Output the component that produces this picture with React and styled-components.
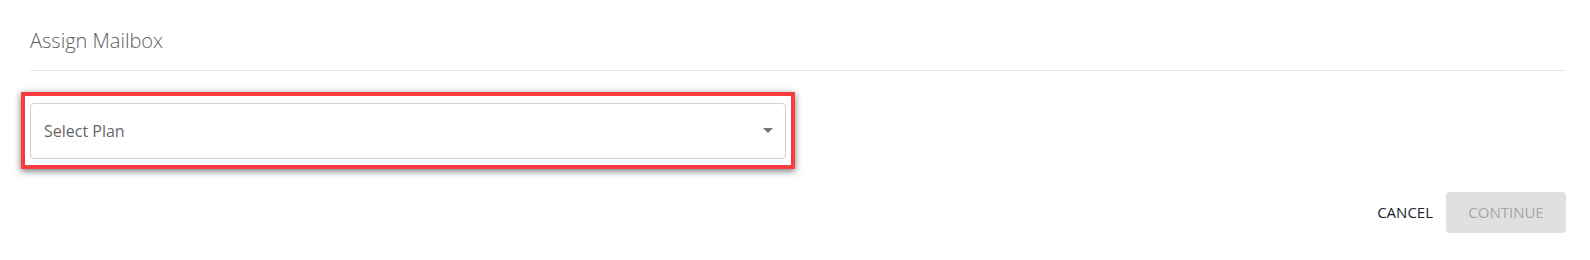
import React from "react";
import styled, { createGlobalStyle } from "styled-components";

const Global = createGlobalStyle`
  html, body { margin: 0; padding: 0; background: #fff; }
  body { font-family: "Open Sans", "Liberation Sans", Arial, sans-serif; }
  * { box-sizing: border-box; }
`;

const Page = styled.div`
  padding: 0 24px 0 30px;
  width: 1590px;
`;

const Header = styled.div`
  padding: 27px 0 15px;
  border-bottom: 1px solid #e6e6e6;
`;

const Title = styled.h2`
  margin: 0;
  font-size: 20px;
  line-height: 28px;
  font-weight: 300;
  color: #606060;
`;

const Highlight = styled.div`
  margin: 21px 0 0 -9px;
  width: 774px;
  border: 4px solid #f73c42;
  padding: 7px 5px 6px;
  box-shadow: 0 2px 7px rgba(0, 0, 0, 0.55);
  background: #fff;
`;

const Select = styled.div`
  position: relative;
  height: 56px;
  border: 1px solid #cfcfcf;
  border-radius: 4px;
  display: flex;
  align-items: center;
  padding: 0 36px 0 13px;
  font-size: 16px;
  color: #666;
  background: #fff;
`;

const Caret = styled.span`
  position: absolute;
  right: 12px;
  top: 50%;
  margin-top: -3px;
  width: 0;
  height: 0;
  border-left: 5px solid transparent;
  border-right: 5px solid transparent;
  border-top: 5px solid #757575;
`;

const Actions = styled.div`
  display: flex;
  justify-content: flex-end;
  align-items: center;
  margin-top: 23px;
`;

const Button = styled.button`
  font-family: inherit;
  font-size: 15px;
  height: 41px;
  line-height: 41px;
  border: none;
  border-radius: 4px;
  text-transform: uppercase;
  padding: ${(p) => (p.$primary ? "0 22px" : "0 13px")};
  min-width: ${(p) => (p.$primary ? "120px" : "auto")};
  background: ${(p) => (p.$primary ? "#e0e0e0" : "transparent")};
  color: ${(p) => (p.$primary ? "#a6a6a6" : "#1a2536")};
  cursor: ${(p) => (p.disabled ? "default" : "pointer")};
`;

export default function App() {
  return (
    <>
      <Global />
      <Page>
        <Header>
          <Title>Assign Mailbox</Title>
        </Header>
        <Highlight>
          <Select>
            Select Plan
            <Caret />
          </Select>
        </Highlight>
        <Actions>
          <Button>Cancel</Button>
          <Button $primary disabled>
            Continue
          </Button>
        </Actions>
      </Page>
    </>
  );
}
